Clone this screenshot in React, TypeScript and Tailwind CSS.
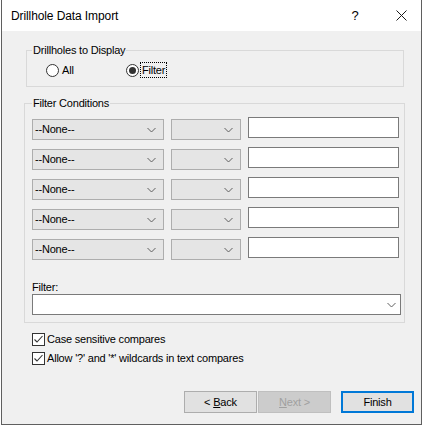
const font = { fontFamily: '"Liberation Sans", Arial, sans-serif' };

function Chevron() {
  return (
    <svg width="9" height="6" viewBox="0 0 9 6" className="shrink-0">
      <path d="M0.5 1 L4.5 5 L8.5 1" fill="none" stroke="#606060" strokeWidth="1" />
    </svg>
  );
}

function Combo({ width, text }: { width: string; text?: string }) {
  return (
    <div
      className={`${width} mt-[2px] flex h-[21px] items-center justify-between border border-[#adadad] bg-[#e5e5e5] pl-[2px] pr-[7px]`}
    >
      <span>{text}</span>
      <Chevron />
    </div>
  );
}

function Radio({ checked }: { checked?: boolean }) {
  return (
    <span className="flex h-[13px] w-[13px] items-center justify-center rounded-full border border-[#333333] bg-white">
      {checked && <span className="h-[7px] w-[7px] rounded-full bg-[#333333]" />}
    </span>
  );
}

function Check() {
  return (
    <span className="flex h-[13px] w-[13px] items-center justify-center border border-[#333333] bg-white">
      <svg width="11" height="11" viewBox="0 0 11 11">
        <path d="M1.5 5.5 L4 8 L9.5 2" fill="none" stroke="#333333" strokeWidth="1.1" />
      </svg>
    </span>
  );
}

function ConditionRow() {
  return (
    <div className="flex h-[23px] items-start">
      <Combo width="w-[132px]" text="--None--" />
      <div className="ml-[7px]">
        <Combo width="w-[70px]" />
      </div>
      <div className="ml-[7px] h-[21px] w-[151px] border border-[#7a7a7a] bg-white" />
    </div>
  );
}

export default function App() {
  return (
    <div className="h-[427px] w-[426px] bg-white text-black" style={font}>
      <div className="ml-px flex h-[425px] w-[421px] flex-col border-x border-b border-[#5f5f5f]">
        <div className="flex h-[31px] shrink-0 items-center bg-white pl-[9px] text-[12px]">
          <span className="flex-1 tracking-[-0.1px]">Drillhole Data Import</span>
          <span className="w-[20px] text-center text-[13px]">?</span>
          <svg width="11" height="11" viewBox="0 0 11 11" className="ml-[31px] mr-[14px]">
            <path d="M0.5 0.5 L10.5 10.5 M10.5 0.5 L0.5 10.5" stroke="#1a1a1a" strokeWidth="1" />
          </svg>
        </div>

        <div className="flex flex-1 flex-col bg-[#f0f0f0] text-[11px] tracking-[-0.2px]">
          <fieldset className="ml-[24px] mt-[12px] w-[378px] border border-[#d9d9d9] pb-[8px] pl-[5px]">
            <legend className="px-px leading-[14px]">Drillholes to Display</legend>
            <div className="mt-[5px] flex h-[16px] items-center pl-[14px]">
              <div className="flex w-[80px] items-center gap-[3px]">
                <Radio />
                <span>All</span>
              </div>
              <div className="flex items-center gap-[1px]">
                <Radio checked />
                <span className="border border-dotted border-black px-px leading-[14px]">Filter</span>
              </div>
            </div>
          </fieldset>

          <fieldset className="ml-[22px] mt-[9px] w-[381px] border border-[#d9d9d9] pb-[7px] pl-[7px]">
            <legend className="px-px leading-[14px]">Filter Conditions</legend>
            <div className="mt-[7px] flex flex-col gap-[7px]">
              <ConditionRow />
              <ConditionRow />
              <ConditionRow />
              <ConditionRow />
              <ConditionRow />
            </div>
            <div className="mt-[20px] leading-[14px]">Filter:</div>
            <div className="flex h-[21px] w-[369px] items-center justify-end border border-[#7a7a7a] bg-white pr-[4px]">
              <Chevron />
            </div>
          </fieldset>

          <div className="ml-[30px] mt-[8px] flex flex-col gap-[3px]">
            <label className="flex h-[16px] items-center gap-[2px]">
              <Check />
              <span>Case sensitive compares</span>
            </label>
            <label className="flex h-[16px] items-center gap-[2px]">
              <Check />
              <span>Allow '?' and '*' wildcards in text compares</span>
            </label>
          </div>

          <div className="mr-[7px] mt-[25px] flex justify-end">
            <button className="h-[22px] w-[73px] border border-[#adadad] bg-[#e1e1e1]">
              &lt; <span className="underline">B</span>ack
            </button>
            <button className="ml-px h-[22px] w-[73px] border border-[#bfbfbf] bg-[#cccccc] text-[#a0a0a0]">
              <span className="underline">N</span>ext &gt;
            </button>
            <button className="ml-[10px] h-[22px] w-[73px] border-2 border-[#0078d7] bg-[#e1e1e1]">
              Finish
            </button>
          </div>
        </div>
      </div>
    </div>
  );
}
